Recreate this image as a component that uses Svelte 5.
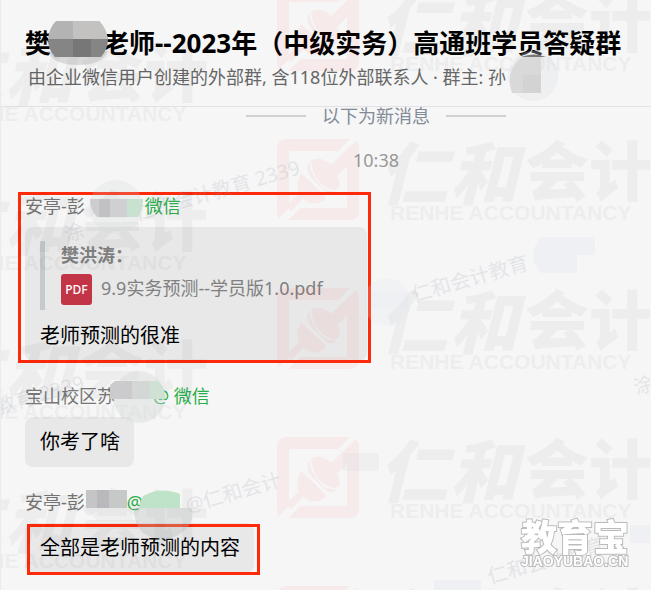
<script lang="ts">
	// brand stamps repeat down the page in two staggered columns
	const stamps = [
		[-168, -109],
		[-168, 40],
		[-168, 189],
		[-168, 338],
		[-168, 487],
		[277, -10],
		[277, 139],
		[277, 288],
		[277, 437],
		[277, 586]
	];

	const traces = [
		{ x: 66, y: 242, text: '涂' },
		{ x: 137, y: 221, text: '仁和会计教育 2339' },
		{ x: 414, y: 302, text: '仁和会计教育' },
		{ x: -2, y: 414, text: '教育 2339' },
		{ x: 188, y: 513, text: '@仁和会计' },
		{ x: 490, y: 584, text: '仁和会计教育' },
		{ x: 636, y: 395, text: '涂' }
	];
</script>

<div class="chat">
	<header>
		<h1>
			<span>樊</span>
			<svg class="mask" width="52" height="36" aria-hidden="true">
				<path d="M-3 30H57Q52 44 27 44Q2 44 -3 30Z" fill="#888" opacity="0.25" />
				<path d="M5 0H48Q55 7 57 18H-3Q-2 7 5 0Z" fill="#b3b3b3" />
				<path d="M22 0H48Q55 7 57 18H22Z" fill="#c3c2c1" />
				<path d="M-3 18H57Q57 28 50 36H4Q-3 28 -3 18Z" fill="#858585" />
				<path d="M22 18H40V36H22Z" fill="#777" />
			</svg>
			<span>老师--2023年（中级实务）高通班学员答疑群</span>
		</h1>
		<p class="info">
			<span>由企业微信用户创建的外部群, 含118位外部联系人 · 群主: 孙</span>
			<svg class="mask" width="34" height="24" aria-hidden="true">
				<circle cx="27" cy="10" r="25" fill="#d9dde3" opacity="0.3" />
				<path d="M5 24Q0 4 14 -7Q22 -14 35 -10V27H6Z" fill="#d9d9da" />
				<path d="M17 9H35V27H17Z" fill="#cfcfd0" opacity="0.6" />
				<path d="M15 -9Q28 -14 40 -9Z" fill="#777" />
			</svg>
		</p>
	</header>

	<main>
		<div class="new">以下为新消息</div>
		<time>10:38</time>

		<article>
			<div class="sender">
				<span>安亭-彭</span>
				<svg class="mask" width="60" height="22" aria-hidden="true">
					<circle cx="31" cy="12" r="27" fill="#ccd0d4" opacity="0.2" />
					<path d="M5 4H21V22H12Q5 15 5 4Z" fill="#cdcdd0" />
					<path d="M14 4H25V22H14Z" fill="#c1c1c4" />
					<path d="M25 4H42V22H25Z" fill="#cfd0d1" />
					<path d="M42 4H58Q58 15 53 22H42Z" fill="#c9e2cf" />
				</svg>
				<span class="from">微信</span>
			</div>
			<div class="bubble quoted">
				<blockquote>
					<strong>樊洪涛：</strong>
					<div class="file">
						<span class="pdf">PDF</span>
						<span>9.9实务预测--学员版1.0.pdf</span>
					</div>
				</blockquote>
				<p>老师预测的很准</p>
			</div>
			<div class="marker whole"></div>
		</article>

		<article>
			<div class="sender">
				<span>宝山校区苏</span>
				<svg class="mask over" width="46" height="22" aria-hidden="true">
					<circle cx="24" cy="12" r="26" fill="#d2dad5" opacity="0.4" />
					<path d="M0 -4H17V14H-5V0Z" fill="#cbcbce" />
					<path d="M17 -4H35V14H17Z" fill="#d3d8d6" />
					<path d="M35 -4H43Q50 3 51 14H35Z" fill="#cfe1d4" />
				</svg>
				<span class="from">@ 微信</span>
			</div>
			<div class="bubble"><p>你考了啥</p></div>
		</article>

		<article>
			<div class="sender">
				<span>安亭-彭</span>
				<svg class="mask" width="42" height="22" aria-hidden="true">
					<path d="M1 -1H24V17H1Z" fill="#c5c5c8" />
					<path d="M12 -1H24V17H12Z" fill="#b9b9bd" />
					<path d="M24 -1H42V17H24Z" fill="#c5cac9" />
					<path d="M0 17H48V30H12Z" fill="#ddd" opacity="0.3" />
				</svg>
				<span class="from">@</span>
				<svg class="mask over" width="36" height="22" aria-hidden="true">
					<path d="M0 5Q17 -5 37 3V17H-4Q-3 10 0 5Z" fill="#bfe3c8" />
					<path d="M-9 17H49Q52 33 38 42Q20 55 0 42Q-10 32 -9 17Z" fill="#aeb8b1" opacity="0.32" />
				</svg>
			</div>
			<div class="answer">
				<div class="bubble"><p>全部是老师预测的内容</p></div>
				<div class="marker"></div>
			</div>
		</article>
	</main>

	<svg class="overlay" aria-hidden="true">
		{#each stamps as [x, y]}
			<g transform="translate({x} {y})">
				<g fill="#ff2030" opacity="0.05">
					<path d="M10 0H73L61 12H12V69L2 79Q0 77 0 72V10Q0 0 10 0Z" />
					<path d="M79 2Q82 5 82 10V72Q82 81 72 81H11L24 69H70V27L60 37Q65 47 61 50Q56 53 49 48Q37 42 34 22Q38 19 44 20Q50 22 54 26Z" />
					<path d="M32 23Q34 38 46 49Q52 53 60 52Q56 57 50 54L36 41Q27 31 32 23Z" />
					<path d="M24 34L48 57Q49 61 44 63Q34 67 27 60Q18 53 21 41Z" />
					<path d="M22 54L27 59L14 72L9 67Z" />
				</g>
				<g fill="#000" opacity="0.032">
					<text class="brush" x="102" y="60">仁</text>
					<text class="brush" x="173" y="60">和</text>
					<text class="brand" x="248" y="56">会计</text>
					<text class="latin" x="113" y="81">RENHE ACCOUNTANCY</text>
				</g>
			</g>
		{/each}

		{#each traces as t}
			<text class="trace" transform="translate({t.x} {t.y}) rotate(-16)">{t.text}</text>
		{/each}

		<g fill="#dfe6f0" opacity="0.35">
			<path d="M541 237H595V255H533Q534 245 541 237Z" />
			<path d="M533 255H577V273H541Q533 265 533 255Z" />
			<circle cx="387" cy="302" r="24" opacity="0.5" />
			<path d="M372 291H406Q410 300 408 309H372Z" />
			<path d="M434 580H481V590H434Z" />
			<path d="M630 525H651V543H630Z" />
		</g>
		<path d="M343 453H379V471H343Z" fill="#ddd" opacity="0.3" />
	</svg>

	<svg class="logo" width="112" height="52" aria-label="教育宝">
		<text class="name" x="1" y="33">教育宝</text>
		<text class="site" x="1" y="48">JIAOYUBAO.CN</text>
	</svg>
</div>

<style>
	:global(body) {
		margin: 0;
		background: #f6f6f6;
	}
	.chat {
		position: relative;
		box-sizing: border-box;
		min-height: 100vh;
		overflow: hidden;
		border-left: 1px solid #ebebeb;
		background: #f6f6f6;
		font-family: 'Noto Sans', 'Noto Sans CJK SC', sans-serif;
		font-size: 18px;
		line-height: 22px;
		white-space: nowrap;
	}
	header {
		padding: 25px 24px 18px;
		border-bottom: 1px solid #e2e2e2;
	}
	h1,
	p,
	blockquote {
		margin: 0;
	}
	h1,
	.info,
	.sender {
		display: flex;
	}
	h1 {
		height: 36px;
		font-size: 26px;
		line-height: 36px;
		color: #000;
	}
	h1 .mask {
		margin-top: -4px;
	}
	.mask {
		position: relative;
		z-index: 1;
		flex: none;
		overflow: visible;
	}
	.info {
		height: 22px;
		padding: 5px 3px 0;
		color: #666;
	}
	main {
		display: flex;
		flex-direction: column;
		gap: 24px;
		padding: 0 24px 16px;
	}
	.new {
		display: flex;
		align-items: center;
		justify-content: center;
		gap: 16px;
		height: 18px;
		margin-left: 100px;
		color: #828b98;
	}
	.new::before,
	.new::after {
		content: '';
		width: 60px;
		height: 2px;
		background: #d0d0d0;
	}
	time {
		margin-left: 100px;
		text-align: center;
		color: #999;
	}
	article {
		position: relative;
		width: fit-content;
	}
	.sender {
		margin-bottom: 10px;
		color: #777;
	}
	.from {
		color: #2aae4a;
	}
	.over {
		margin-right: -8px;
	}
	.bubble {
		width: fit-content;
		padding: 11px 14px 11px 15px;
		border-radius: 8px;
		background: #e8e8e8;
		font-size: 20px;
		line-height: 28px;
		color: #000;
	}
	.quoted {
		padding-top: 14px;
	}
	blockquote {
		margin-bottom: 12px;
		padding: 2px 30px 5px 16px;
		border-left: 5px solid #c4cacd;
		font-size: 18px;
		line-height: 24px;
		color: #808080;
	}
	strong {
		display: block;
		margin-bottom: 7px;
	}
	.file {
		display: flex;
		gap: 9px;
		line-height: 28px;
	}
	.pdf {
		width: 31px;
		border-radius: 3px;
		background: #c23547;
		font-size: 12px;
		font-weight: 500;
		line-height: 31px;
		text-align: center;
		color: #fff;
	}
	.answer {
		position: relative;
		width: fit-content;
	}
	.marker {
		position: absolute;
		inset: 1px -6px -2px 2px;
		border: 3px solid #ff2a0a;
	}
	.whole {
		inset: -3px -4px -2px -7px;
	}
	.overlay {
		position: absolute;
		top: 0;
		left: -1px;
		width: 100%;
		height: 100%;
		pointer-events: none;
	}
	.brush,
	.brand {
		font-family: 'Noto Sans CJK SC', sans-serif;
		font-size: 64px;
		font-weight: 900;
	}
	.brush {
		font-size: 68px;
		font-style: italic;
	}
	.latin {
		font-family: 'Liberation Sans', sans-serif;
		font-size: 21px;
		font-weight: bold;
	}
	.trace {
		font-size: 20px;
		fill: #8a93a5;
		opacity: 0.17;
	}
	.logo {
		position: absolute;
		right: 19px;
		bottom: 20px;
		fill: #fff;
		stroke: #bbb;
		stroke-width: 2px;
		paint-order: stroke;
		overflow: visible;
	}
	.name {
		font-size: 36px;
		font-weight: 900;
	}
	.site {
		font-family: 'Liberation Sans', sans-serif;
		font-size: 14px;
		font-weight: bold;
	}
</style>
